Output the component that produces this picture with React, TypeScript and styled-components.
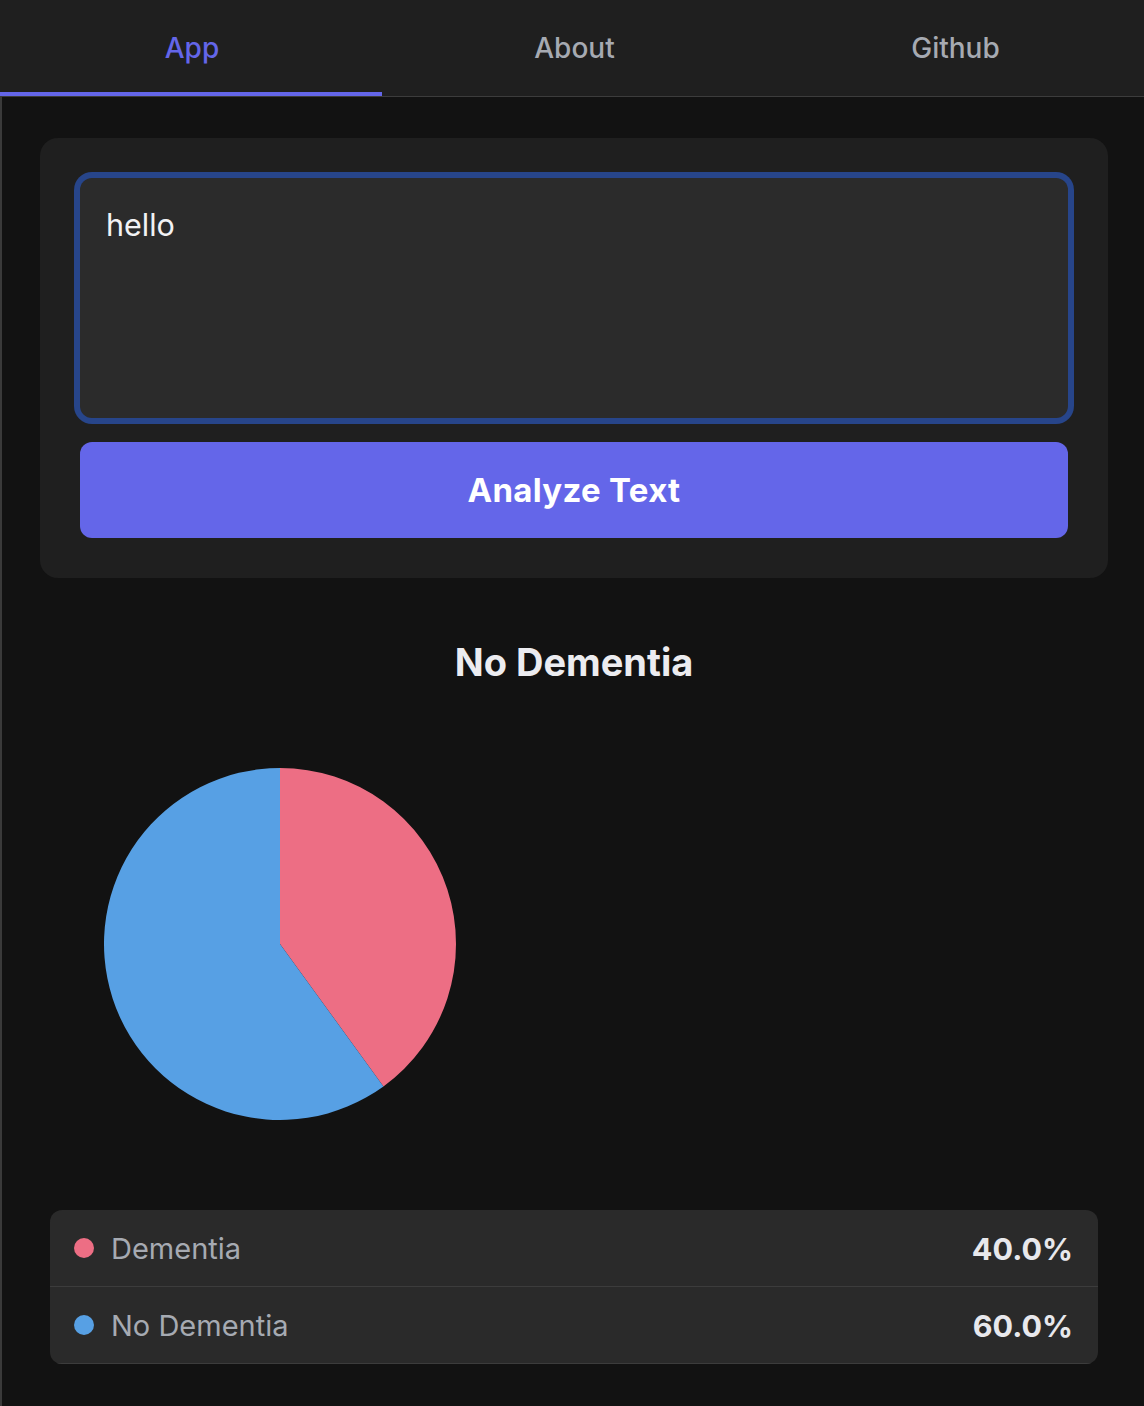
import React, { useState } from "react";
import styled, { createGlobalStyle } from "styled-components";

const GlobalStyle = createGlobalStyle`
  html, body {
    margin: 0;
    padding: 0;
    background: #121212;
  }
  body {
    font-family: Inter, "Noto Sans", "Liberation Sans", sans-serif;
    color: #e8e8ec;
  }
  * { box-sizing: border-box; }
`;

const Shell = styled.div`
  min-height: 1406px;
  background: #121212;
  border-left: 2px solid #3a3a3a;
`;

const TabBar = styled.nav`
  display: grid;
  grid-template-columns: 382px 383px 1fr;
  height: 97px;
  background: #1f1f1f;
  border-bottom: 1px solid #3c3c3c;
  margin-left: -2px;
`;

const Tab = styled.button<{ $active?: boolean }>`
  appearance: none;
  border: 0;
  background: transparent;
  font-family: inherit;
  font-size: 28px;
  font-weight: 500;
  color: ${(p) => (p.$active ? "#6466e9" : "#a6aab2")};
  display: flex;
  align-items: center;
  justify-content: center;
  padding: 0 0 0 2px;
  cursor: pointer;
  box-shadow: ${(p) => (p.$active ? "inset 0 -4px 0 #6466e9" : "none")};
`;

const Main = styled.main`
  padding: 41px 36px 40px 38px;
  display: flex;
  flex-direction: column;
`;

const Card = styled.section`
  background: #1f1f1f;
  border-radius: 18px;
  padding: 40px;
  display: flex;
  flex-direction: column;
  gap: 24px;
`;

const TextArea = styled.textarea`
  display: block;
  width: 100%;
  height: 240px;
  resize: none;
  border: 0;
  outline: none;
  border-radius: 12px;
  background: #2b2b2b;
  box-shadow: 0 0 0 6px #27458a;
  color: #f2f2f4;
  font-family: inherit;
  font-size: 30.5px;
  line-height: 1.5;
  padding: 24px 26px;
`;

const AnalyzeButton = styled.button`
  appearance: none;
  border: 0;
  height: 96px;
  border-radius: 12px;
  background: #6466e9;
  color: #ffffff;
  font-family: inherit;
  font-size: 33px;
  font-weight: 700;
  letter-spacing: 0.3px;
  cursor: pointer;
`;

const Results = styled.section`
  display: flex;
  flex-direction: column;
  padding: 0 10px;
`;

const ResultTitle = styled.h2`
  margin: 62px 0 0;
  text-align: center;
  font-size: 38px;
  line-height: 44px;
  font-weight: 700;
  color: #ececf0;
`;

const ChartArea = styled.div`
  display: flex;
  padding: 84px 0 90px 54px;
`;

const Legend = styled.ul`
  list-style: none;
  margin: 0;
  padding: 0;
  background: #2a2a2a;
  border-radius: 12px;
  overflow: hidden;
`;

const LegendRow = styled.li`
  display: flex;
  align-items: center;
  height: 77px;
  padding: 0 25px 0 24px;
  border-bottom: 1px solid #3c3c3c;
`;

const Dot = styled.span<{ $color: string }>`
  width: 20px;
  height: 20px;
  border-radius: 50%;
  background: ${(p) => p.$color};
  margin-right: 17px;
  flex: none;
`;

const Label = styled.span`
  flex: 1;
  font-size: 29px;
  color: #a6aab2;
`;

const Value = styled.span`
  font-size: 30.5px;
  font-weight: 700;
  color: #e8e8ec;
`;

type Slice = { label: string; value: number; color: string };

const data: Slice[] = [
  { label: "Dementia", value: 40, color: "#ed6e84" },
  { label: "No Dementia", value: 60, color: "#57a0e4" },
];

function PieChart({ slices, size }: { slices: Slice[]; size: number }) {
  const r = size / 2;
  const total = slices.reduce((s, d) => s + d.value, 0);
  let acc = 0;
  return (
    <svg width={size} height={size} viewBox={`0 0 ${size} ${size}`}>
      {slices.map((s) => {
        const a0 = (acc / total) * Math.PI * 2;
        acc += s.value;
        const a1 = (acc / total) * Math.PI * 2;
        const x0 = r + r * Math.sin(a0);
        const y0 = r - r * Math.cos(a0);
        const x1 = r + r * Math.sin(a1);
        const y1 = r - r * Math.cos(a1);
        const large = a1 - a0 > Math.PI ? 1 : 0;
        return (
          <path
            key={s.label}
            d={`M ${r} ${r} L ${x0} ${y0} A ${r} ${r} 0 ${large} 1 ${x1} ${y1} Z`}
            fill={s.color}
          />
        );
      })}
    </svg>
  );
}

export default function App() {
  const [text, setText] = useState("hello");
  const [tab, setTab] = useState("App");
  return (
    <>
      <GlobalStyle />
      <Shell>
        <TabBar>
          {["App", "About", "Github"].map((t) => (
            <Tab key={t} $active={tab === t} onClick={() => setTab(t)}>
              {t}
            </Tab>
          ))}
        </TabBar>
        <Main>
          <Card>
            <TextArea value={text} onChange={(e) => setText(e.target.value)} />
            <AnalyzeButton>Analyze Text</AnalyzeButton>
          </Card>
          <Results>
            <ResultTitle>No Dementia</ResultTitle>
            <ChartArea>
              <PieChart slices={data} size={352} />
            </ChartArea>
            <Legend>
              {data.map((d) => (
                <LegendRow key={d.label}>
                  <Dot $color={d.color} />
                  <Label>{d.label}</Label>
                  <Value>{d.value.toFixed(1)}%</Value>
                </LegendRow>
              ))}
            </Legend>
          </Results>
        </Main>
      </Shell>
    </>
  );
}
